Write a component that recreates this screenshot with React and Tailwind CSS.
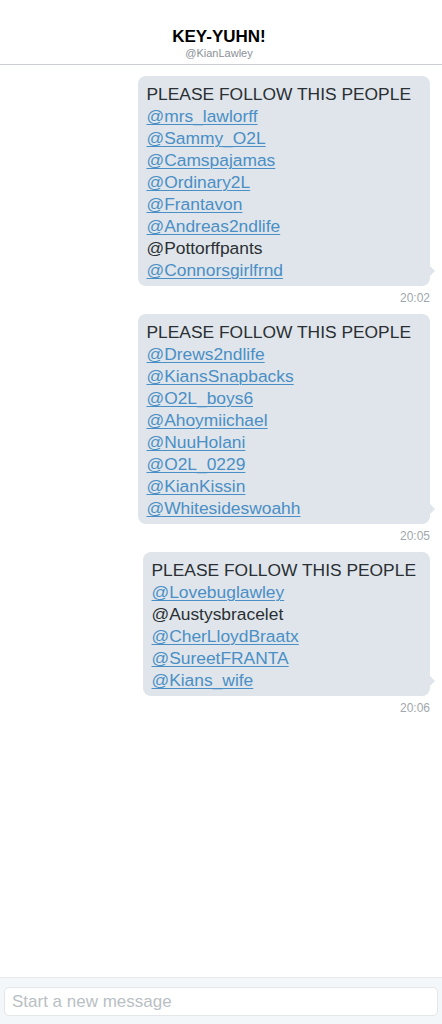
import React from 'react';

const messages = [
  {
    time: '20:02',
    pad: 'pr-[19px]',
    lines: [
      ['@mrs_lawlorff', true],
      ['@Sammy_O2L', true],
      ['@Camspajamas', true],
      ['@Ordinary2L', true],
      ['@Frantavon', true],
      ['@Andreas2ndlife', true],
      ['@Pottorffpants', false],
      ['@Connorsgirlfrnd', true],
    ],
  },
  {
    time: '20:05',
    pad: 'pr-[19px]',
    lines: [
      ['@Drews2ndlife', true],
      ['@KiansSnapbacks', true],
      ['@O2L_boys6', true],
      ['@Ahoymiichael', true],
      ['@NuuHolani', true],
      ['@O2L_0229', true],
      ['@KianKissin', true],
      ['@Whitesideswoahh', true],
    ],
  },
  {
    time: '20:06',
    pad: 'pr-[14px]',
    lines: [
      ['@Lovebuglawley', true],
      ['@Austysbracelet', false],
      ['@CherLloydBraatx', true],
      ['@SureetFRANTA', true],
      ['@Kians_wife', true],
    ],
  },
];

const Bubble = ({ msg }) => (
  <div className="flex flex-col items-end pr-3">
    <div className={`relative bg-[#dfe5ea] rounded-[8px] pl-[9px] ${msg.pad} pt-[7px] pb-[5px] text-[17.4px] leading-[22px] text-[#2a2f33]`}>
      <div>PLEASE FOLLOW THIS PEOPLE</div>
      {msg.lines.map(([name, link], i) => (
        <div key={i}>
          {link ? (
            <span className="text-[#4a8fc6] underline underline-offset-2 decoration-1">{name}</span>
          ) : (
            <span>{name}</span>
          )}
        </div>
      ))}
      <div className="absolute right-[-5px] bottom-[10px] w-0 h-0 border-t-[5px] border-t-transparent border-b-[5px] border-b-transparent border-l-[5px] border-l-[#dfe5ea]" />
    </div>
    <div className="text-[12px] text-[#a0a7ad] mt-[3px] mb-[7px]">{msg.time}</div>
  </div>
);

export default function App() {
  return (
    <div className="w-[442px] h-[1024px] bg-white flex flex-col font-['Liberation_Sans',Arial,sans-serif]">
      <div className="h-[65px] flex flex-col items-center justify-end pb-[4px] pr-[4px] border-b border-[#c9ced2]">
        <div className="text-[17px] font-bold text-black leading-[20px]">KEY-YUHN!</div>
        <div className="text-[11px] text-[#8a9197] leading-[13px]">@KianLawley</div>
      </div>
      <div className="flex-1 pt-[11px]">
        {messages.map((m, i) => (
          <Bubble key={i} msg={m} />
        ))}
      </div>
      <div className="h-[47px] bg-[#f4f7f9] border-t border-[#e6eaed] px-[4px] pt-[9px]">
        <div className="h-[29px] bg-white border border-[#e3e7ea] rounded-[5px] px-[7px] flex items-center text-[17px] text-[#b9bfc4]">
          Start a new message
        </div>
      </div>
    </div>
  );
}
